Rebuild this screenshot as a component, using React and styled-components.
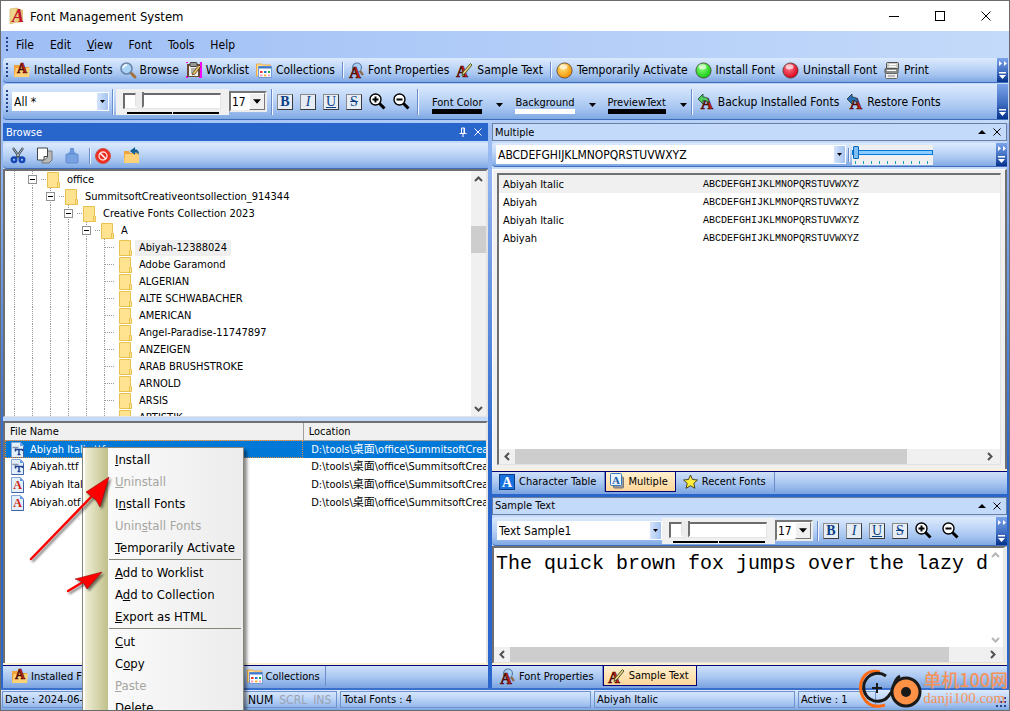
import { useState } from "react";
import styled, { createGlobalStyle, css } from "styled-components";

const GlobalStyle = createGlobalStyle`
  * {
    box-sizing: border-box;
  }

  body {
    margin: 0;
    overflow: hidden;
  }

  body, button, select, input {
    font-family: "DejaVu Sans Condensed", "Noto Sans CJK SC", sans-serif;
    font-size: 11px;
    color: #000;
  }

  button {
    border: none;
    background: none;
    padding: 0;
  }

  svg {
    display: block;
    flex: none;
    overflow: visible;
  }
`;

const bar = "linear-gradient(#dceafd, #c3d9f8 35%, #a5c4f0 70%, #7fa8e3)";

const Window = styled.div`
  position: relative;
  display: flex;
  flex-direction: column;
  height: 100vh;
  overflow: hidden;
  border: 1px solid #6b6b6b;
  background: #c4dafa;
`;

const TitleBar = styled.header`
  display: flex;
  align-items: center;
  height: 30px;
  padding-left: 8px;
  background: #fff;

  h1 {
    flex: 1;
    margin: 0 0 0 5px;
    font-size: 13px;
    font-weight: normal;
  }
`;

const WindowButton = styled.button`
  display: grid;
  place-items: center;
  width: 46px;
  height: 30px;
`;

const MenuBar = styled.nav`
  display: flex;
  align-items: center;
  height: 27px;
  padding-left: 5px;
  background: linear-gradient(90deg, #9ebef5, #c4dafa);

  button {
    padding: 0 8px;
    font-size: 12px;
  }
`;

const Toolbars = styled.div`
  display: flex;
  flex-direction: column;
  gap: 1px;
  padding: 0 1px 3px 2px;
  background: linear-gradient(90deg, #9ebef5, #c4dafa);
`;

const Toolbar = styled.div`
  display: flex;
  align-items: center;
  flex: none;
  height: ${(p) => p.$height}px;
  padding-left: ${(p) => p.$inset || 3}px;
  border-bottom: 1px solid #3f6cb8;
  border-radius: 4px 0 0 4px;
  background: ${bar};
  overflow: hidden;
`;

const Grip = styled.i`
  width: 2px;
  height: ${(p) => p.$height || 15}px;
  margin-right: ${(p) => (p.$gap === undefined ? 5 : p.$gap)}px;
  background: repeating-linear-gradient(#27418a 0 2px, transparent 2px 4px);
`;

const ToolButton = styled.button`
  display: flex;
  align-items: center;
  gap: 4px;
  flex: none;
  margin-right: 7px;
  font-size: 12px;
  white-space: nowrap;
`;

const Divider = styled.i`
  width: 2px;
  height: ${(p) => p.$height || 16}px;
  margin-left: ${(p) => p.$before || 0}px;
  margin-right: ${(p) => p.$gap || 4}px;
  border-left: 1px solid #6a8ccb;
  border-right: 1px solid #f1f6fd;
`;

const Spacer = styled.i`
  flex: 1;
`;

const Overflow = styled.button`
  display: flex;
  flex-direction: column;
  justify-content: space-between;
  align-items: center;
  align-self: stretch;
  flex: none;
  width: 11px;
  padding: 3px 0;
  background: linear-gradient(#7ba3ea, #3b69bd 60%, #06318c);
`;

const Combo = styled.span`
  display: flex;
  align-items: center;
  flex: none;
  width: ${(p) => p.$width || 97}px;
  min-width: 0;
  height: 19px;
  background: #fff;
  position: relative;

  select {
    appearance: none;
    width: 100%;
    height: 100%;
    padding: 0 2px;
    border: none;
    outline: none;
    background: transparent;
    font-size: 12px;
  }

  svg {
    position: absolute;
    right: 1px;
    width: 11px;
    height: 17px;
    background: linear-gradient(90deg, #d3e4fb, #a4c3f0);
    pointer-events: none;
  }

  ${(p) =>
    p.$sunken &&
    css`
      width: 38px;
      height: 21px;
      margin-right: 4px;
      border: 2px solid #767676;
      border-right-color: #ededed;
      border-bottom-color: #ededed;

      select {
        padding: 0 1px;
      }

      svg {
        right: 0;
        width: 16px;
        background: #f0f0f0;
        border: 1px solid #fff;
        border-right-color: #777;
        border-bottom-color: #777;
      }
    `}
`;

const SizeSlider = styled.label`
  display: flex;
  flex-direction: column;
  flex: none;
  gap: 1px;
  width: 113px;
  height: 26px;
  padding: 2px 8px 0 7px;
  background: #f0f0f0;

  input {
    appearance: none;
    width: 98px;
    height: 20px;
    margin: 0;
    background: none;
  }

  input::-webkit-slider-runnable-track {
    height: 16px;
    border: 1px solid #e4e4e4;
    border-top: 2px solid #6b6b6b;
    border-left: 2px solid #6b6b6b;
    background: #fff;
  }

  input::-webkit-slider-thumb {
    appearance: none;
    width: 9px;
    height: 19px;
    margin-top: -3px;
    border: none;
    border-radius: 0;
    background: linear-gradient(90deg, #d5d5d5 1px, #ececec 1px 7px, #707070 7px);
    clip-path: polygon(0 0, 100% 0, 100% 75%, 50% 100%, 0 75%);
  }
`;

const Ticks = styled.i`
  width: 92px;
  height: 2px;
  margin-left: 4px;
  background: linear-gradient(90deg, #000 45px, #f0f0f0 45px 46px, #000 46px);
`;

const ZoomSlider = styled.label`
  display: flex;
  flex-direction: column;
  width: 81px;
  height: 20px;
  background: #f0f0f0;

  input {
    appearance: none;
    width: 100%;
    height: 16px;
    margin: 0;
    background: none;
  }

  input::-webkit-slider-runnable-track {
    height: 5px;
    border: 1px solid #0078d7;
    background: #8ecbff;
  }

  input::-webkit-slider-thumb {
    appearance: none;
    width: 6px;
    height: 13px;
    margin-top: -5px;
    border: 1px solid #0067c0;
    border-radius: 1px;
    background: #7fbdf5;
  }

  i {
    height: 3px;
    margin-left: 3px;
    background: repeating-linear-gradient(90deg, #1a9bc4 0 1px, transparent 1px 8px);
  }
`;

const LetterButton = styled.button`
  display: grid;
  place-items: center;
  flex: none;
  width: 16px;
  height: 16px;
  margin-right: 7px;
  border: 1px solid #3b3b3b;
  border-top-color: #8b8b8b;
  border-left-color: #8b8b8b;
  background: #e6edf5;
  color: #0b3f86;
  font: ${(p) => p.$letter} 14px/14px "Liberation Serif", serif;
  text-decoration: ${(p) => p.$line || "none"};
`;

const IconButton = styled.button`
  flex: none;
  margin-right: ${(p) => p.$gap || 7}px;
`;

const ColorButton = styled.button`
  display: flex;
  align-items: center;
  flex: none;
  gap: 14px;
  margin-left: 12px;
  padding-top: 6px;

  span {
    border-bottom: 5px solid ${(p) => p.$color};
    line-height: 13px;
  }
`;

const Main = styled.main`
  display: grid;
  grid-template-columns: minmax(0, 485fr) minmax(0, 515fr);
  grid-template-rows: minmax(0, 1fr);
  gap: 4px;
  flex: 1;
  min-height: 0;
  padding: 0 2px;
  background: linear-gradient(#a2c1f5, #2a66cc 60%);
`;

const Column = styled.div`
  display: flex;
  flex-direction: column;
  min-width: 0;
  min-height: 0;
`;

const Pane = styled.section`
  display: flex;
  flex-direction: column;
  flex: ${(p) => p.$share || 1} 1 0;
  min-height: 0;
  margin-bottom: ${(p) => p.$gap || 0}px;
  background: #c4dafa;
`;

const PaneHeader = styled.header`
  display: flex;
  align-items: center;
  flex: none;
  gap: 7px;
  height: 18px;
  margin-bottom: 2px;
  padding: 0 5px 0 2px;
  border: 1px solid ${(p) => (p.$active ? "#2866cc" : "#6c7fa0")};
  background: ${(p) => (p.$active ? "#2866cc" : "#c4dafa")};
  color: ${(p) => (p.$active ? "#fff" : "#000")};

  h2 {
    flex: 1;
    margin: 0;
    font-size: 11px;
    font-weight: normal;
  }

  button {
    color: inherit;
  }
`;

const Sunken = styled.div`
  display: flex;
  flex: ${(p) => p.$share || 1} 1 0;
  min-height: 0;
  overflow: hidden;
  margin-top: ${(p) => p.$gap || 0}px;
  border: 2px solid #6f6f6f;
  border-right: 2px solid #e3e3e3;
  border-bottom: 1px solid #e3e3e3;
  background: #fff;
`;

const Tree = styled.ul`
  flex: 1;
  margin: 0;
  padding: 0;
  overflow: hidden;
  list-style: none;
`;

const TreeRow = styled.li`
  display: flex;
  align-items: center;
  height: 17px;

  span {
    padding: 0 4px;
    margin-left: 3px;
    line-height: 16px;
    background: ${(p) => (p.$selected ? "#efefef" : "none")};
  }
`;

const Guide = styled.i`
  display: grid;
  place-items: center;
  width: 18px;
  height: 17px;
  background: repeating-linear-gradient(#999 0 1px, #fff 1px 2px) 9px 0 / 1px 100% no-repeat;
`;

const Expander = styled.button`
  width: 9px;
  height: 9px;
  border: 1px solid #919191;
  background: linear-gradient(#000, #000) center / 5px 1px no-repeat #fff;
`;

const Dash = styled.i`
  width: ${(p) => (p.$leaf ? 10 : 6)}px;
  height: 1px;
  margin-left: ${(p) => (p.$leaf ? -8 : 0)}px;
  margin-right: ${(p) => (p.$leaf ? 4 : 0)}px;
  background: repeating-linear-gradient(90deg, #999 0 1px, #fff 1px 2px);
`;

const ScrollTrack = styled.div`
  display: flex;
  flex: none;
  flex-direction: ${(p) => (p.$across ? "row" : "column")};
  align-items: center;
  background: ${(p) => (p.$plain ? "#fff" : "#f0f0f0")};
  ${(p) => (p.$across ? "height: 15px; padding-right: 3px;" : "width: 15px;")}

  button {
    display: grid;
    place-items: center;
    flex: none;
    width: 16px;
    height: 16px;
  }
`;

const Thumb = styled.i`
  flex: ${(p) => p.$size} 1 0;
  align-self: stretch;
  background: #cdcdcd;
`;

const Rest = styled.i`
  flex: ${(p) => p.$size} 1 0;
`;

const FileTable = styled.table`
  align-self: flex-start;
  width: 100%;
  table-layout: fixed;
  border-collapse: collapse;

  th, td {
    height: 18px;
    padding: 0 0 0 8px;
    line-height: 16px;
    text-align: left;
    font-weight: normal;
    white-space: nowrap;
    overflow: hidden;
  }

  th {
    height: 17px;
    padding-left: 5px;
    background: #f0f0f0;
    border-bottom: 1px solid #a0a0a0;
  }

  th:first-child {
    width: 62%;
    border-right: 1px solid #a0a0a0;
  }

  td:first-child > span {
    display: flex;
    align-items: center;
    gap: 6px;
    margin-left: -2px;
  }
`;

const FileRow = styled.tr`
  background: ${(p) => (p.$selected ? "#0078d7" : "#fff")};
  color: ${(p) => (p.$selected ? "#fff" : "#000")};

  td:first-child {
    outline: ${(p) => (p.$selected ? "1px dotted #e08a3c" : "none")};
    outline-offset: -1px;
  }
`;

const Tab = styled.button`
  display: flex;
  align-items: center;
  gap: 4px;
  height: 20px;
  padding: 0 8px 0 7px;
  border-right: 1px solid #6a8ccb;
  ${(p) =>
    p.$active &&
    css`
      padding: 0 7px 0 4px;
      border: 1px solid #00007b;
      border-top: none;
      background: linear-gradient(#fff0cf, #ffd69a);
    `}
`;

const TabBar = styled.nav`
  display: flex;
  flex: none;
  height: 23px;
  padding-left: ${(p) => (p.$compact ? 4 : 0)}px;
  margin-top: 1px;
  border-top: 1px solid #00007b;
  box-shadow: 0 -2px 0 #fcf1d3;
  background: linear-gradient(#cfe0f8, #a9c7f1 50%, #7aa3e0);

  ${Tab} {
    ${(p) => p.$compact && "gap: 3px; padding: 0 5px 0 4px;"}
  }
`;

const PreviewFrame = styled.div`
  display: flex;
  flex: 1;
  min-height: 0;
  margin-top: 2px;
  padding: 3px 4px 4px;
  background: #f0f0f0;
  border: 1px solid #fff;
  border-right: 2px solid #6f6f6f;
`;

const PreviewBox = styled.div`
  display: flex;
  flex-direction: column;
  justify-content: space-between;
  flex: 1;
  min-width: 0;
  border: 2px solid #6f6f6f;
  border-right: 1px solid #e3e3e3;
  border-bottom: 1px solid #e3e3e3;
  background: #fff;
`;

const PreviewTable = styled.table`
  width: 100%;
  border-collapse: collapse;
  table-layout: fixed;

  th, td {
    height: 18px;
    padding: 0 0 0 4px;
    text-align: left;
    font-weight: normal;
  }

  th {
    width: 200px;
  }

  td {
    font: 10px "Liberation Mono", monospace;
  }

  tr:first-child {
    background: #f0f0f0;
  }
`;

const SampleArea = styled.div`
  display: flex;
  flex-direction: column;
  flex: 1;
  min-height: 0;
  border: 2px solid #6f6f6f;
  border-right: 4px solid #e8e8e8;
  border-bottom-color: #e3e3e3;
  background: #fff;

  > div:first-child {
    display: flex;
    flex: 1;
    min-height: 0;
  }

  textarea {
    flex: 1;
    min-width: 0;
    padding: 3px 2px;
    border: none;
    outline: none;
    resize: none;
    overflow: hidden;
    white-space: pre;
    font: 20px/26px "Liberation Mono", monospace;
  }
`;

const StatusBar = styled.footer`
  display: grid;
  grid-template-columns: 337fr 252fr 202fr 78fr 131fr;
  gap: 3px;
  flex: none;
  height: 22px;
  padding: 1px 0 2px 1px;
  border-top: 2px solid #3a6fcb;
  background: ${bar};

  > div {
    display: flex;
    align-items: center;
    padding: 0 2px;
    white-space: nowrap;
    border: 1px solid #6f93cf;
  }

  > div:first-child {
    padding-right: 5px;
  }

  > div:last-child {
    justify-content: flex-end;
    align-items: flex-end;
    border: none;
  }
`;

const Key = styled.span`
  margin-left: 6px;
  font-size: 12px;
  color: ${(p) => (p.$off ? "#98a3b5" : "#000")};
`;

const ContextMenu = styled.div`
  position: absolute;
  left: 81px;
  top: 446px;
  width: 162px;
  padding: 0 2px 6px 26px;
  border: 1px solid #85857a;
  background: linear-gradient(90deg, #fff 2px, #efedd5 2px, #bfc08a 25px, #fafafa 25px, #ececec);
  box-shadow: 3px 3px 3px rgba(0, 0, 0, 0.45);

  button {
    display: block;
    width: 100%;
    height: 22px;
    padding-left: 6px;
    text-align: left;
    font-size: 13px;
  }

  button:disabled {
    color: #a5a5a0;
  }

  hr {
    height: 1px;
    margin: 1px 0;
    border: none;
    background: #85857a;
  }
`;

const Arrows = styled.svg`
  position: absolute;
  left: 20px;
  top: 465px;
  filter: drop-shadow(2px 2px 1px rgba(0, 0, 0, 0.5));
  pointer-events: none;
`;

const Watermark = styled.div`
  position: absolute;
  right: 1px;
  bottom: 1px;
  display: flex;
  align-items: center;
  gap: 1px;
  color: #f5935a;

  strong {
    display: block;
    font: 500 18px/19px "Noto Sans CJK SC", sans-serif;
  }

  small {
    display: block;
    font: 15px/18px "Liberation Serif", serif;
  }
`;

const Letter = ({ x = 9, y = 15, size = 16 }) => (
  <text
    x={x}
    y={y}
    fontSize={size}
    fontFamily="Liberation Serif, serif"
    fontWeight="bold"
    textAnchor="middle"
    fill="#c8200f"
    stroke="#4a0b05"
    strokeWidth="0.7"
  >
    A
  </text>
);

const Svg = ({ w = 16, h = w, children }) => (
  <svg width={w} height={h} viewBox={`0 0 ${w} ${h}`} aria-hidden="true">
    {children}
  </svg>
);

const AppIcon = () => (
  <Svg w={16} h={18}>
    <path d="M1 2l7-1v14l-7 2z" fill="#eed58d" stroke="#c9ac5c" strokeWidth=".6" />
    <path d="M8 1l6 2v12l-6 1z" fill="#e3c478" />
    <text x="9" y="15" fontSize="18" fontStyle="italic" fontWeight="bold" fontFamily="Liberation Serif, serif" textAnchor="middle" fill="#c3152a">A</text>
  </Svg>
);

const FolderFontIcon = () => (
  <Svg w={17} h={16}>
    <path d="M1 3h5l1 2h9v10H1z" fill="#f3a33c" />
    <path d="M3 6h14l-1 9H1z" fill="#ffd277" />
    <Letter x={9} y={11} size={14} />
  </Svg>
);

const LensIcon = () => (
  <Svg>
    <path d="M10.500 10.500l4.500 4.500" stroke="#a5713a" strokeWidth="3" strokeLinecap="round" />
    <circle cx="6.500" cy="6.500" r="5.500" fill="#a9d3f7" stroke="#6b86a8" strokeWidth="1.600" />
    <path d="M3 6a4 4 0 0 1 4-3" stroke="#fff" strokeWidth="1.600" fill="none" />
  </Svg>
);

const WorklistIcon = () => (
  <Svg>
    <path d="M0 0h2v1H0zM14 0h2v16h-3v-1h1zM0 14h2v2H0z" fill="#f0f" />
    <rect x="1" y="2" width="13" height="13" fill="#6b4a35" />
    <rect x="3" y="4" width="9" height="10" fill="#f1efe9" />
    <rect x="4" y="0.500" width="7" height="4" rx="1" fill="#999" stroke="#444" />
    <path d="M5 7h5M5 9h4M5 11h3" stroke="#777" />
    <path d="M13 3l1.500 1.500L9 12l-2.500 1L7 10.500z" fill="#f1cb6b" stroke="#4c3717" strokeWidth=".8" />
  </Svg>
);

const CollectionIcon = () => (
  <Svg>
    <path d="M.5 2h5l1 1h8v4H2.500v7h-2z" fill="#ffe08f" stroke="#efa94c" />
    <rect x="2.500" y="4.500" width="13" height="11" fill="#fff" stroke="#6f9bd8" />
    <path d="M3 5.500h12" stroke="#3d78c8" strokeWidth="2" />
    <path d="M4 9h2.500v2H4z" fill="#e33" />
    <path d="M8 9h2.500v2H8z" fill="#27c" />
    <path d="M12 9h2v2h-2z" fill="#2a4" />
    <path d="M4 12.500h2.500v2H4zM12 12.500h2v2h-2z" fill="#f2a0c0" />
    <path d="M8 12.500h2.500v2H8z" fill="#f6b73c" />
  </Svg>
);

const FontLensIcon = () => (
  <Svg w={16} h={17}>
    <circle cx="9" cy="5.500" r="4.500" fill="#a8d0f2" stroke="#5c7da5" strokeWidth="1.200" />
    <Letter x={7} y={16} size={16} />
    <path d="M12 9l3 4" stroke="#8c6b4a" strokeWidth="2.400" />
  </Svg>
);

const FontPencilIcon = () => (
  <Svg w={17} h={16}>
    <Letter x={6} y={15} size={16} />
    <path d="M14.500 1.500l1.500 1.500-7 8.500-3 2 1-3.500z" fill="#ead28a" stroke="#4b5b28" />
  </Svg>
);

const FontArrowIcon = ({ color }) => (
  <Svg w={17} h={17}>
    <Letter x={10} y={16} size={17} />
    <path d="M1 6l5-5v3c4 0 6 2 6 6-2-2-3-2.500-6-2.500V11z" fill={color} stroke="#1d3b31" strokeWidth=".8" />
  </Svg>
);

const Ball = ({ id, light, dark }) => (
  <Svg w={17}>
    <defs>
      <radialGradient id={id} cx=".4" cy=".35" r=".65">
        <stop offset="0" stopColor={light} />
        <stop offset="1" stopColor={dark} />
      </radialGradient>
    </defs>
    <circle cx="8.500" cy="8.500" r="7.600" fill={`url(#${id})`} stroke="#4d4337" strokeWidth=".8" />
    <ellipse cx="7.500" cy="4.800" rx="4" ry="2.600" fill="#fff" opacity=".65" />
  </Svg>
);

const PrintIcon = () => (
  <Svg w={16} h={17}>
    <rect x="2.500" y=".5" width="12" height="7" rx="1" fill="#c9cbc9" stroke="#555" />
    <path d="M5 2.500h7M5 4.500h7" stroke="#fff" />
    <rect x="1" y="6.500" width="13" height="5" rx="1" fill="#8d8f8d" stroke="#555" />
    <path d="M3 8.500h9" stroke="#fff" />
    <rect x="1.500" y="11.500" width="12" height="5" rx="1" fill="#eee" stroke="#666" />
    <path d="M4 14h7" stroke="#888" />
  </Svg>
);

const ZoomIcon = ({ plus }) => (
  <Svg w={17}>
    <path d="M10 10l5.500 5.500" stroke="#000" strokeWidth="3" />
    <circle cx="6.500" cy="6.500" r="5.500" fill="#fff" stroke="#000" strokeWidth="1.400" />
    <path d={plus ? "M3.500 6.500h6M6.500 3.500v6" : "M3.500 6.500h6"} stroke="#000" strokeWidth="2" />
  </Svg>
);

const CutIcon = () => (
  <Svg w={16} h={17}>
    <path d="M3 1l7 10M13 1L6 11" stroke="#33414c" strokeWidth="2.200" />
    <path d="M3 1l6 8.500M13 1L7 9.500" stroke="#e8eef2" strokeWidth=".7" />
    <circle cx="4" cy="12.800" r="2.300" fill="none" stroke="#1747b5" strokeWidth="2.400" />
    <circle cx="12" cy="12.800" r="2.300" fill="none" stroke="#1747b5" strokeWidth="2.400" />
  </Svg>
);

const CopyIcon = () => (
  <Svg w={17}>
    <path d="M6 4h10v9l-3 3H6z" fill="#b9b9b9" stroke="#777" />
    <path d="M1.500 1h10v9l-3 3h-7z" fill="#fff" stroke="#444" />
    <path d="M11.500 9.500h-3.500V13" fill="#ddd" stroke="#444" />
  </Svg>
);

const PasteIcon = () => (
  <Svg w={14} h={17}>
    <path d="M5 1h4v3l3 4H2l3-4z" fill="#6e98dc" />
    <rect x="1" y="7" width="12" height="9" rx="1" fill="#78a1e1" stroke="#5f8bd3" />
  </Svg>
);

const StopIcon = () => (
  <Svg w={16}>
    <circle cx="8" cy="8" r="7.500" fill="#ee2e20" stroke="#c9564b" />
    <circle cx="8" cy="8" r="4" fill="none" stroke="#ffd9d4" strokeWidth="1.400" />
    <path d="M5 5l6 6" stroke="#fff" strokeWidth="1.600" />
  </Svg>
);

const UpFolderIcon = () => (
  <Svg w={17}>
    <path d="M1 4h5l1 2h9v10H1z" fill="#f0a53f" />
    <path d="M2 7h14v9H1z" fill="#ffd27a" />
    <path d="M7 4l5-4v2.500c3 0 4 2 4 5.500-1-2-2-2.500-4-2.500V8z" fill="#15608f" />
  </Svg>
);

const FolderIcon = () => (
  <Svg w={13} h={16}>
    <path d="M.5.500h11v10h1v5H.5z" fill="#ffe391" stroke="#e8c14e" />
    <path d="M10.500 10v5" stroke="#e8c14e" />
  </Svg>
);

const FileIcon = ({ type }) => (
  <Svg w={13} h={16}>
    <path d="M.5.500h9l3 3v12H.5z" fill="#e4effc" stroke="#86a5d4" />
    <path d="M9 .500v3.500h3.500z" fill="#5a9ae6" />
    <path d="M.5 15.500h12v-11" fill="none" stroke="#3f62a5" />
    {type === "ttf" ? (
      <>
        <path d="M1.500 5.500h6M4.500 5v5" stroke="#8593a8" strokeWidth="1.400" />
        <path d="M4.500 7.500h7M8 7v5.500M6.500 12.500h3M4.500 7v2M11.500 7v2" stroke="#1c3f8f" strokeWidth="1.400" />
      </>
    ) : (
      <text x="6.500" y="12" fontSize="12" fontWeight="bold" fontFamily="Liberation Serif, serif" textAnchor="middle" fill="#cf1f10">A</text>
    )}
  </Svg>
);

const CharTableIcon = () => (
  <Svg w={16}>
    <rect x=".5" y=".5" width="15" height="15" fill="#1671dc" stroke="#0b3a86" />
    <text x="8" y="13" fontSize="14" fontWeight="bold" fontFamily="Liberation Serif, serif" textAnchor="middle" fill="#fff">A</text>
  </Svg>
);

const MultipleIcon = () => (
  <Svg w={14} h={16}>
    <rect x="3.500" y="4" width="10" height="11" rx="1" fill="#999" stroke="#777" />
    <rect x=".5" y=".5" width="11" height="12" rx="1" fill="#e8f3fd" stroke="#3978bd" />
    <text x="6" y="11" fontSize="11" fontWeight="bold" fontFamily="Liberation Serif, serif" textAnchor="middle" fill="#1d5fae">A</text>
  </Svg>
);

const StarIcon = () => (
  <Svg w={15}>
    <path d="M7.500 1l2 4.500 5 .5-3.700 3.300 1.100 5-4.400-2.600-4.400 2.600 1.100-5L.5 6l5-.5z" fill="#ffee3d" stroke="#4a4520" />
  </Svg>
);

const Caret = () => (
  <Svg w={7} h={4}>
    <path d="M0 0h7L3.500 4z" fill="#000" />
  </Svg>
);

const CloseIcon = ({ w = 9 }) => (
  <Svg w={w}>
    <path d={`M.5.500l${w - 1} ${w - 1}M${w - 0.5}.500l-${w - 1} ${w - 1}`} stroke="currentColor" />
  </Svg>
);

const chevrons = {
  up: "M1 6l3.500-3.500L8 6",
  down: "M1 3l3.500 3.500L8 3",
  left: "M6 1L2.500 4.500 6 8",
  right: "M3 1l3.500 3.500L3 8",
};

const Chevron = ({ to, color = "#505050" }) => (
  <Svg w={9}>
    <path d={chevrons[to]} fill="none" stroke={color} strokeWidth="2" />
  </Svg>
);

function Scrollbar({ across, before = 0, size = 1, after = 0, plain }) {
  const [first, last] = across ? ["left", "right"] : ["up", "down"];
  const color = plain ? "#b5b5b5" : undefined;

  return (
    <ScrollTrack $across={across} $plain={plain}>
      <button aria-label={`Scroll ${first}`}>
        <Chevron to={first} color={color} />
      </button>
      <Rest $size={before} />
      {plain ? <Rest $size={1} /> : <Thumb $size={size} />}
      <Rest $size={after} />
      <button aria-label={`Scroll ${last}`}>
        <Chevron to={last} color={color} />
      </button>
    </ScrollTrack>
  );
}

function ComboBox({ label, value, ...rest }) {
  return (
    <Combo {...rest}>
      <select aria-label={label} defaultValue={value}>
        <option>{value}</option>
      </select>
      <svg viewBox="0 0 11 17" aria-hidden="true">
        <path d={rest.$sunken ? "M1 6h9L5.500 11z" : "M3 7h5L5.500 10z"} fill="#000" />
      </svg>
    </Combo>
  );
}

function OverflowButton({ single }) {
  return (
    <Overflow aria-label="More buttons">
      <Svg w={8} h={5}>
        {!single && <path d="M0 0l3 2.500L0 5zM5 0l3 2.500L5 5z" fill="#fff" />}
      </Svg>
      <Svg w={7} h={7}>
        <path d="M0 0h7v1.500H0zM0 3h7L3.500 7z" fill="#fff" />
      </Svg>
    </Overflow>
  );
}

function FontSize() {
  return (
    <>
      <SizeSlider>
        <input type="range" aria-label="Font size" min="0" max="100" defaultValue="12" />
        <Ticks />
      </SizeSlider>
      <ComboBox label="Size" value="17" $sunken />
    </>
  );
}

function StyleButtons() {
  return (
    <>
      <LetterButton $letter="bold">B</LetterButton>
      <LetterButton $letter="italic">I</LetterButton>
      <LetterButton $letter="normal" $line="underline">U</LetterButton>
      <LetterButton $letter="normal" $line="line-through">S</LetterButton>
    </>
  );
}

const tree = [
  { name: "office", depth: 1, open: true },
  { name: "SummitsoftCreativeontsollection_914344", depth: 2, open: true },
  { name: "Creative Fonts Collection 2023", depth: 3, open: true },
  { name: "A", depth: 4, open: true },
  ...[
    "Abiyah-12388024",
    "Adobe Garamond",
    "ALGERIAN",
    "ALTE SCHWABACHER",
    "AMERICAN",
    "Angel-Paradise-11747897",
    "ANZEIGEN",
    "ARAB BRUSHSTROKE",
    "ARNOLD",
    "ARSIS",
    "ARTISTIK",
  ].map((name) => ({ name, depth: 5 })),
];

const files = [
  { name: "Abiyah Italic.ttf", type: "ttf" },
  { name: "Abiyah.ttf", type: "ttf" },
  { name: "Abiyah Italic.otf", type: "otf" },
  { name: "Abiyah.otf", type: "otf" },
];

const fonts = ["Abiyah Italic", "Abiyah", "Abiyah Italic", "Abiyah"];
const alphabet = "ABCDEFGHIJKLMNOPQRSTUVWXYZ";

function BrowsePane() {
  const [selected, setSelected] = useState(0);

  return (
    <Pane>
      <PaneHeader $active>
        <h2>Browse</h2>
        <button aria-label="Pin">
          <Svg w={8} h={10}>
            <path d="M2.500 6V1h3v5M5 1v5M.5 6.500h7M4 7v3" fill="none" stroke="#fff" />
          </Svg>
        </button>
        <button aria-label="Close">
          <CloseIcon w={8} />
        </button>
      </PaneHeader>
      <Toolbar $height={26} $inset={7}>
        <IconButton $gap={10} aria-label="Cut"><CutIcon /></IconButton>
        <IconButton $gap={12} aria-label="Copy"><CopyIcon /></IconButton>
        <IconButton $gap={10} aria-label="Paste"><PasteIcon /></IconButton>
        <Divider />
        <IconButton $gap={12} aria-label="Delete"><StopIcon /></IconButton>
        <IconButton aria-label="Up one level"><UpFolderIcon /></IconButton>
      </Toolbar>
      <Sunken $share={248}>
        <Tree>
          {tree.map((node) => (
            <TreeRow key={node.name} $selected={node.name === "Abiyah-12388024"}>
              {Array.from({ length: node.depth }, (_, i) => (
                <Guide key={i} />
              ))}
              <Guide>{node.open && <Expander aria-label={`Collapse ${node.name}`} />}</Guide>
              <Dash $leaf={!node.open} />
              <FolderIcon />
              <span>{node.name}</span>
            </TreeRow>
          ))}
        </Tree>
        <Scrollbar before={39} size={27} after={146} />
      </Sunken>
      <Sunken $share={242} $gap={4}>
        <FileTable>
          <thead>
            <tr>
              <th>File Name</th>
              <th>Location</th>
            </tr>
          </thead>
          <tbody>
            {files.map((file, i) => (
              <FileRow key={file.name} $selected={i === selected} onClick={() => setSelected(i)}>
                <td>
                  <span>
                    <FileIcon type={file.type} />
                    {file.name}
                  </span>
                </td>
                <td>D:\tools\桌面\office\SummitsoftCreativeontsollection</td>
              </FileRow>
            ))}
          </tbody>
        </FileTable>
      </Sunken>
      <TabBar $compact>
        <Tab><FolderFontIcon />Installed Fonts</Tab>
        <Tab><LensIcon />Browse</Tab>
        <Tab><WorklistIcon />Worklist</Tab>
        <Tab><CollectionIcon />Collections</Tab>
      </TabBar>
    </Pane>
  );
}

function HeaderButtons() {
  return (
    <>
      <button aria-label="Collapse">
        <Svg w={8} h={4}>
          <path d="M4 0l4 4H0z" fill="#000" />
        </Svg>
      </button>
      <button aria-label="Close">
        <CloseIcon w={8} />
      </button>
    </>
  );
}

function MultiplePane() {
  return (
    <Pane $share={370} $gap={3}>
      <PaneHeader>
        <h2>Multiple</h2>
        <HeaderButtons />
      </PaneHeader>
      <Toolbar $height={24} $inset={4}>
        <ComboBox label="Preview text" value={alphabet} $width={350} />
        <Divider $height={14} $before={2} $gap={2} />
        <ZoomSlider>
          <input type="range" aria-label="Zoom" min="0" max="10" defaultValue="0" />
          <i />
        </ZoomSlider>
        <Spacer />
        <OverflowButton />
      </Toolbar>
      <PreviewFrame>
        <PreviewBox>
          <PreviewTable>
            <tbody>
              {fonts.map((name, i) => (
                <tr key={i}>
                  <th scope="row">{name}</th>
                  <td>{alphabet}</td>
                </tr>
              ))}
            </tbody>
          </PreviewTable>
          <Scrollbar across size={393} after={74} />
        </PreviewBox>
      </PreviewFrame>
      <TabBar>
        <Tab><CharTableIcon />Character Table</Tab>
        <Tab $active><MultipleIcon />Multiple</Tab>
        <Tab><StarIcon />Recent Fonts</Tab>
      </TabBar>
    </Pane>
  );
}

function SamplePane() {
  return (
    <Pane $share={191}>
      <PaneHeader>
        <h2>Sample Text</h2>
        <HeaderButtons />
      </PaneHeader>
      <Toolbar $height={29} $inset={5}>
        <ComboBox label="Sample" value="Text Sample1" $width={165} />
        <Spacer />
        <FontSize />
        <Divider $height={20} />
        <StyleButtons />
        <IconButton $gap={10} aria-label="Zoom in"><ZoomIcon plus /></IconButton>
        <IconButton $gap={37} aria-label="Zoom out"><ZoomIcon /></IconButton>
        <OverflowButton />
      </Toolbar>
      <SampleArea>
        <div>
          <textarea aria-label="Sample text" defaultValue="The quick brown fox jumps over the lazy dog" />
          <Scrollbar plain />
        </div>
        <Scrollbar across size={434} after={35} />
      </SampleArea>
      <TabBar>
        <Tab><FontLensIcon />Font Properties</Tab>
        <Tab $active><FontPencilIcon />Sample Text</Tab>
      </TabBar>
    </Pane>
  );
}

function FileMenu() {
  return (
    <ContextMenu>
      <button><u>I</u>nstall</button>
      <button disabled><u>U</u>ninstall</button>
      <button>I<u>n</u>stall Fonts</button>
      <button disabled>Unin<u>s</u>tall Fonts</button>
      <button><u>T</u>emporarily Activate</button>
      <hr />
      <button><u>A</u>dd to Worklist</button>
      <button>A<u>d</u>d to Collection</button>
      <button><u>E</u>xport as HTML</button>
      <hr />
      <button><u>C</u>ut</button>
      <button>C<u>o</u>py</button>
      <button disabled><u>P</u>aste</button>
      <button><u>D</u>elete</button>
    </ContextMenu>
  );
}

export default function App() {
  return (
    <>
      <GlobalStyle />
      <Window>
        <TitleBar>
          <AppIcon />
          <h1>Font Management System</h1>
          <WindowButton aria-label="Minimize">
            <Svg w={10}><path d="M0 5.500h10" stroke="#000" /></Svg>
          </WindowButton>
          <WindowButton aria-label="Maximize">
            <Svg w={10}><rect x=".5" y=".5" width="9" height="9" fill="none" stroke="#000" /></Svg>
          </WindowButton>
          <WindowButton aria-label="Close"><CloseIcon w={10} /></WindowButton>
        </TitleBar>
        <MenuBar>
          <Grip $gap={0} />
          <button>File</button>
          <button>Edit</button>
          <button><u>V</u>iew</button>
          <button>Font</button>
          <button>Tools</button>
          <button>Help</button>
        </MenuBar>
        <Toolbars>
          <Toolbar $height={25}>
            <Grip />
            <ToolButton><FolderFontIcon />Installed Fonts</ToolButton>
            <ToolButton><LensIcon />Browse</ToolButton>
            <ToolButton><WorklistIcon />Worklist</ToolButton>
            <ToolButton><CollectionIcon />Collections</ToolButton>
            <Divider />
            <ToolButton><FontLensIcon />Font Properties</ToolButton>
            <ToolButton><FontPencilIcon />Sample Text</ToolButton>
            <Divider />
            <ToolButton><Ball id="amber" light="#ffe27a" dark="#f29100" />Temporarily Activate</ToolButton>
            <ToolButton><Ball id="green" light="#8dff7a" dark="#12c812" />Install Font</ToolButton>
            <ToolButton><Ball id="red" light="#ff7a86" dark="#d8001c" />Uninstall Font</ToolButton>
            <ToolButton><PrintIcon />Print</ToolButton>
            <Spacer />
            <OverflowButton />
          </Toolbar>
          <Toolbar $height={36}>
            <Grip $height={23} $gap={4} />
            <ComboBox label="Filter" value="All *" />
            <Divider $height={26} $before={3} $gap={2} />
            <FontSize />
            <Divider $height={26} />
            <StyleButtons />
            <IconButton aria-label="Zoom in"><ZoomIcon plus /></IconButton>
            <IconButton aria-label="Zoom out"><ZoomIcon /></IconButton>
            <Divider $height={26} $gap={1} />
            <ColorButton $color="#000"><span>Font Color</span><Caret /></ColorButton>
            <ColorButton $color="#fff"><span>Background</span><Caret /></ColorButton>
            <ColorButton $color="#000"><span>PreviewText</span><Caret /></ColorButton>
            <Divider $height={26} $before={4} />
            <ToolButton><FontArrowIcon color="#4fd05a" />Backup Installed Fonts</ToolButton>
            <ToolButton><FontArrowIcon color="#2a6fb5" />Restore Fonts</ToolButton>
            <Spacer />
            <OverflowButton single />
          </Toolbar>
        </Toolbars>
        <Main>
          <Column>
            <BrowsePane />
          </Column>
          <Column>
            <MultiplePane />
            <SamplePane />
          </Column>
        </Main>
        <StatusBar>
          <div>
            Date : 2024-06-
            <Spacer />
            <Key>NUM</Key>
            <Key $off>SCRL</Key>
            <Key $off>INS</Key>
          </div>
          <div>Total Fonts : 4</div>
          <div>Abiyah Italic</div>
          <div>Active : 1</div>
          <div>
            <Svg w={11}>
              <path d="M8 0h2v2H8zM4 4h2v2H4zM8 4h2v2H8zM0 8h2v2H0zM4 8h2v2H4zM8 8h2v2H8z" fill="#27418a" />
            </Svg>
          </div>
        </StatusBar>
        <FileMenu />
        <Arrows width="90" height="135" aria-hidden="true">
          <path d="M10 93L72 29" stroke="#f00" strokeWidth="2.500" strokeLinecap="round" />
          <path d="M88 11L79 41L75 34L65 26z" fill="#f00" stroke="#700" strokeWidth=".5" />
          <path d="M47 125L62 116" stroke="#f00" strokeWidth="2.500" strokeLinecap="round" />
          <path d="M81 106L66 123L62 116L54 113z" fill="#f00" stroke="#700" strokeWidth=".5" />
        </Arrows>
        <Watermark>
          <svg width="64" height="42" viewBox="0 0 64 42" aria-hidden="true">
            <path d="M22 5C6 0-2 18 5 30c5 9 13 11 22 8" fill="none" stroke="#ff6a13" strokeWidth="3" />
            <path d="M28 9A14 14 0 1 0 32 27c5-4 2-14 10-18" fill="none" stroke="#1a1a1a" strokeWidth="3" />
            <path d="M14 21h10M19 16v10" stroke="#1a1a1a" strokeWidth="2" />
            <circle cx="48" cy="25" r="14" fill="#ff9147" stroke="#1a1a1a" strokeWidth="3" />
            <circle cx="48" cy="25" r="5" fill="#1a1a1a" />
          </svg>
          <span>
            <strong>单机100网</strong>
            <small>danji100.com</small>
          </span>
        </Watermark>
      </Window>
    </>
  );
}
